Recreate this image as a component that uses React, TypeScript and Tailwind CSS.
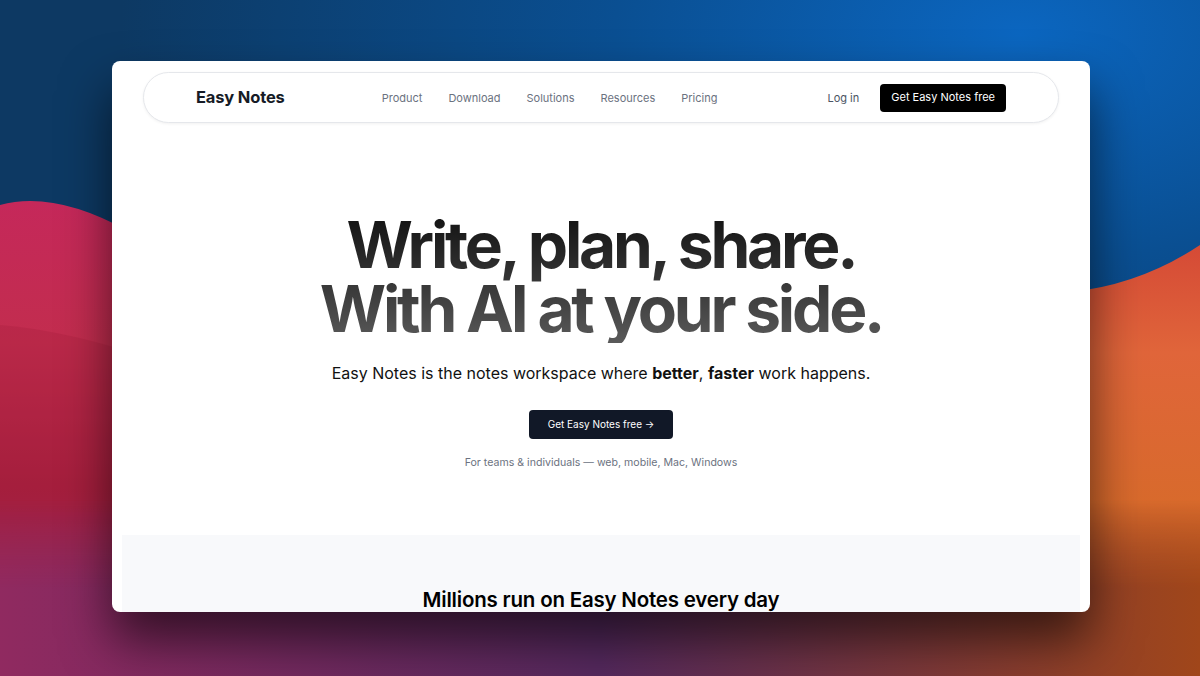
import React from 'react';

function Wallpaper() {
  return (
    <svg className="absolute inset-0 h-full w-full" viewBox="0 0 1200 676" preserveAspectRatio="none">
      <defs>
        <radialGradient id="sky" cx="0.85" cy="0.05" r="0.75">
          <stop offset="0" stopColor="#0b66c0" />
          <stop offset="0.45" stopColor="#0a4f92" />
          <stop offset="1" stopColor="#0d3963" />
        </radialGradient>
        <linearGradient id="left" x1="0" y1="0" x2="0" y2="1">
          <stop offset="0" stopColor="#c5285a" />
          <stop offset="0.3" stopColor="#c22d4e" />
          <stop offset="0.6" stopColor="#a31e3c" />
          <stop offset="1" stopColor="#8e2a60" />
        </linearGradient>
        <linearGradient id="right" x1="0" y1="0" x2="0" y2="1">
          <stop offset="0" stopColor="#d54a36" />
          <stop offset="0.25" stopColor="#e0653a" />
          <stop offset="0.6" stopColor="#d86a2c" />
          <stop offset="1" stopColor="#a4481a" />
        </linearGradient>
        <linearGradient id="bottom" x1="0" y1="0" x2="1" y2="0">
          <stop offset="0" stopColor="#902a60" />
          <stop offset="0.5" stopColor="#55295e" />
          <stop offset="1" stopColor="#a0461a" />
        </linearGradient>
        <linearGradient id="bottomFade" x1="0" y1="0" x2="0" y2="1">
          <stop offset="0" stopColor="white" stopOpacity="0" />
          <stop offset="0.5" stopColor="white" stopOpacity="1" />
          <stop offset="1" stopColor="white" stopOpacity="1" />
        </linearGradient>
        <mask id="fadeMask">
          <rect x="0" y="500" width="1200" height="176" fill="url(#bottomFade)" />
        </mask>
      </defs>
      <rect width="1200" height="676" fill="url(#sky)" />
      <path d="M0 205 Q55 190 130 232 C300 330 500 420 760 676 L0 676 Z" fill="url(#left)" />
      <path d="M0 325 Q60 330 130 352 L130 676 L0 676 Z" fill="#a8203e" opacity="0.35" />
      <path d="M440 676 C700 420 900 310 1070 292 Q1140 285 1200 245 L1200 676 Z" fill="url(#right)" />
      <rect x="0" y="500" width="1200" height="176" fill="url(#bottom)" mask="url(#fadeMask)" />
    </svg>
  );
}

function Navbar() {
  const links = ['Product', 'Download', 'Solutions', 'Resources', 'Pricing'];
  return (
    <div className="mx-[31px] mt-[11px] flex h-[51px] items-center rounded-full border border-[#e5e7eb] bg-white pl-[52px] pr-[52px] shadow-[0_1px_3px_rgba(0,0,0,0.06)]">
      <span className="text-[16.5px] font-bold tracking-[-0.01em] text-[#161b26]">Easy Notes</span>
      <nav className="ml-[97px] flex items-center gap-[26px] pt-[1px] text-[11px] text-[#6b7280]">
        {links.map(l => (
          <span key={l}>{l}</span>
        ))}
      </nav>
      <div className="ml-auto flex items-center gap-[21px]">
        <span className="pt-[1px] text-[11px] text-[#4b5563]">Log in</span>
        <button className="h-[28px] rounded-[4px] bg-black px-[11px] text-[11px] text-white">Get Easy Notes free</button>
      </div>
    </div>
  );
}

export default function App() {
  return (
    <div className="relative h-[676px] w-[1200px] overflow-hidden font-['Inter','Noto_Sans',sans-serif]">
      <Wallpaper />
      <div className="relative ml-[112px] mt-[61px] flex h-[551px] w-[978px] flex-col overflow-hidden rounded-[8px] bg-white shadow-[0_28px_50px_rgba(0,0,0,0.6)]">
        <Navbar />

        {/* Hero */}
        <div className="mt-[90px] flex flex-col items-center text-center">
          <h1 className="bg-linear-to-b from-[#121212] to-[#5a5a5a] bg-clip-text pb-[2px] text-[64px] font-bold leading-[64px] tracking-[-0.05em] text-transparent">
            Write, plan, share.
            <br />
            With AI at your side.
          </h1>
          <p className="mt-[18px] text-[16px] leading-[24px] text-[#111]">
            Easy Notes is the notes workspace where <b className="font-bold">better</b>, <b className="font-bold">faster</b> work happens.
          </p>
          <button className="mt-[25px] h-[29px] w-[144px] rounded-[4px] bg-[#111827] text-[10px] text-white">
            Get Easy Notes free →
          </button>
          <p className="mt-[16px] text-[10.6px] leading-[16px] text-[#6b7280]">
            For teams &amp; individuals — web, mobile, Mac, Windows
          </p>
        </div>

        {/* Logos strip */}
        <div className="mx-[10px] mt-auto h-[77px] bg-[#f8f9fb] pt-[51px] text-center">
          <h2 className="text-[20.5px] font-semibold leading-[28px] tracking-[-0.01em] text-black">Millions run on Easy Notes every day</h2>
        </div>
      </div>
    </div>
  );
}
